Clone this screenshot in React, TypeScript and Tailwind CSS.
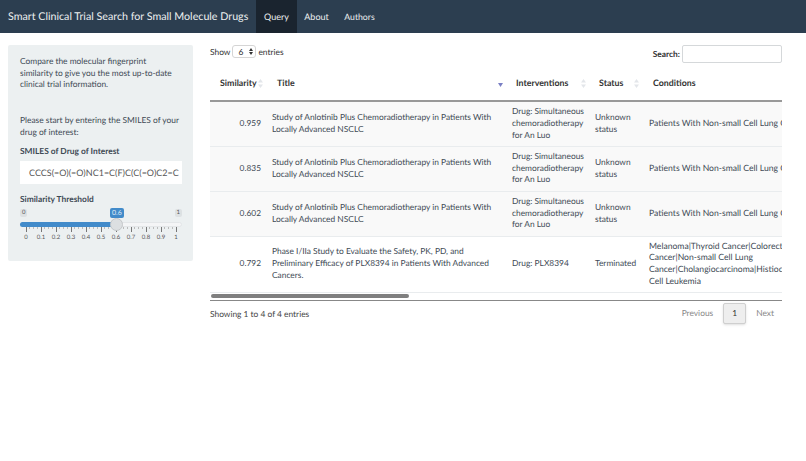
import React from 'react';

const rows = [
    {sim: '0.959', title: 'Study of Anlotinib Plus Chemoradiotherapy in Patients With Locally Advanced NSCLC', drug: 'Drug: Simultaneous chemoradiotherapy for An Luo', status: 'Unknown status', cond: 'Patients With Non-small Cell Lung Cancer', odd: true},
    {sim: '0.835', title: 'Study of Anlotinib Plus Chemoradiotherapy in Patients With Locally Advanced NSCLC', drug: 'Drug: Simultaneous chemoradiotherapy for An Luo', status: 'Unknown status', cond: 'Patients With Non-small Cell Lung Cancer', odd: true},
    {sim: '0.602', title: 'Study of Anlotinib Plus Chemoradiotherapy in Patients With Locally Advanced NSCLC', drug: 'Drug: Simultaneous chemoradiotherapy for An Luo', status: 'Unknown status', cond: 'Patients With Non-small Cell Lung Cancer', odd: true},
    {sim: '0.792', title: 'Phase I/IIa Study to Evaluate the Safety, PK, PD, and Preliminary Efficacy of PLX8394 in Patients With Advanced Cancers.', drug: 'Drug: PLX8394', status: 'Terminated', cond: 'Melanoma|Thyroid Cancer|Colorectal Cancer|Non-small Cell Lung Cancer|Cholangiocarcinoma|Histiocytic Cell Leukemia', odd: false},
];

const ticks = ['0', '0.1', '0.2', '0.3', '0.4', '0.5', '0.6', '0.7', '0.8', '0.9', '1'];

const SortIcon = () => (
    <svg width="5" height="9" viewBox="0 0 5 9" className="shrink-0">
        <path d="M2.5 0 L5 3.5 H0 Z" fill="#e3e6ea"/>
        <path d="M2.5 9 L5 5.5 H0 Z" fill="#e3e6ea"/>
    </svg>
);

const Slider = () => (
    <div className="relative mt-[3px] h-[38px]">
        <span className="absolute left-0 top-[1px] rounded-[2px] bg-[#dde1e3] px-[2px] text-[6px] leading-[8px] text-[#555]">0</span>
        <span className="absolute right-0 top-[1px] rounded-[2px] bg-[#dde1e3] px-[2px] text-[6px] leading-[8px] text-[#555]">1</span>
        <span className="absolute left-[90px] top-0 rounded-[2px] bg-[#428bca] px-[2px] text-[7px] leading-[10px] text-[#dfeaf5]">0.6</span>
        <div className="absolute left-0 right-0 top-[14px] h-[5px] rounded-full border border-[#e3e6e8] bg-[#f4f5f6]"/>
        <div className="absolute left-0 top-[14px] h-[5px] w-[96px] rounded-l-full bg-[#428bca]"/>
        <div className="absolute left-[6px] right-[6px] top-[19px] flex justify-between">
            {ticks.map((t, i) => (
                <React.Fragment key={t}>
                    <div className="relative flex w-0 flex-col items-center">
                        <div className="h-[5px] w-px shrink-0 bg-[#777]"/>
                        <span className="mt-[2px] text-[6px] leading-[8px] text-[#555]">{t}</span>
                    </div>
                    {i < ticks.length - 1 && [0, 1, 2].map(m => <div key={m} className="h-[2px] w-px bg-[#bbb]"/>)}
                </React.Fragment>
            ))}
        </div>
        <div className="absolute left-[90px] top-[10px] h-[13px] w-[13px] rounded-full border border-[#c4c7c9] bg-[#dcdfe1]"/>
    </div>
);

const App = () => {
    return (
        <div className="h-[461px] w-[806px] overflow-hidden bg-white font-['Lato','Liberation_Sans',sans-serif] text-[8.4px] text-[#333] [text-rendering:geometricPrecision]">
            <nav className="flex h-[33px] bg-[#2c3e50] text-[#ecf0f1]">
                <div className="w-[256px] whitespace-nowrap pl-[8px] text-[10.7px] leading-[33px]">Smart Clinical Trial Search for Small Molecule Drugs</div>
                <a className="w-[41px] bg-[#1a242f] text-center text-[9px] leading-[33px]">Query</a>
                <a className="w-[39px] text-center text-[9px] leading-[33px]">About</a>
                <a className="w-[46px] pl-[1px] text-center text-[8.7px] leading-[33px]">Authors</a>
            </nav>
            <div className="flex items-start pl-[8px] pt-[12px]">
                <aside className="h-[216px] w-[185px] shrink-0 rounded-[2px] bg-[#ecf0f1] pl-[12px] pr-[11px] pt-[11px] text-[#3e4a55]">
                    <p className="leading-[11.7px]">Compare the molecular fingerprint<br/>similarity to give you the most up-to-date<br/>clinical trial information.</p>
                    <p className="mt-[24px] leading-[11.7px]">Please start by entering the SMILES of your<br/>drug of interest:</p>
                    <label className="mt-[6px] block font-bold leading-[12px]">SMILES of Drug of Interest</label>
                    <div className="mt-[4px] h-[23px] overflow-hidden whitespace-nowrap bg-white pl-[9px] text-[9px] leading-[23px] text-[#555]">CCCS(=O)(=O)NC1=C(F)C(C(=O)C2=C</div>
                    <label className="mt-[9px] block font-bold leading-[12px]">Similarity Threshold</label>
                    <Slider/>
                </aside>
                <main className="ml-[17px] w-[572px] shrink-0">
                    <div className="flex h-[23px] items-start justify-between">
                        <div className="flex items-center leading-[12px]">
                            Show
                            <span className="mx-[2px] flex h-[13px] w-[24px] items-center justify-between rounded-[3px] border border-[#d5d5d5] pl-[5px] pr-[2px] leading-[12px]">
                                6
                                <svg width="4" height="7" viewBox="0 0 4 7"><path d="M2 0 L4 3 H0 Z M2 7 L4 4 H0 Z" fill="#333"/></svg>
                            </span>
                            entries
                        </div>
                        <div className="flex items-center font-bold">
                            Search:
                            <div className="ml-[2px] h-[18px] w-[100px] rounded-[2px] border border-[#d5d8da] bg-white"/>
                        </div>
                    </div>
                    <div className="overflow-hidden">
                        <table className="w-[604px] table-fixed border-collapse">
                            <colgroup>
                                <col className="w-[62px]"/>
                                <col className="w-[234px]"/>
                                <col className="w-[85px]"/>
                                <col className="w-[54px]"/>
                                <col className="w-[169px]"/>
                            </colgroup>
                            <thead className="text-[8.8px]">
                                <tr className="h-[33px] border-b-2 border-[#999]">
                                    <th className="pb-[2px] pl-[10px] pr-[9px] font-bold"><div className="flex items-center justify-between whitespace-nowrap">Similarity<SortIcon/></div></th>
                                    <th className="pb-[2px] pl-[5px] pr-[3px] text-left font-bold">
                                        <div className="flex items-center justify-between">
                                            Title
                                            <svg width="5" height="4" viewBox="0 0 5 4" className="mt-[4px] shrink-0"><path d="M0 0 H5 L2.5 4 Z" fill="#7a7fc4"/></svg>
                                        </div>
                                    </th>
                                    <th className="pb-[2px] pl-[10px] pr-[5px] text-left font-bold"><div className="flex items-center justify-between">Interventions<SortIcon/></div></th>
                                    <th className="pb-[2px] pl-[8px] pr-[6px] text-left font-bold"><div className="flex items-center justify-between">Status<SortIcon/></div></th>
                                    <th className="pb-[2px] pl-[8px] text-left font-bold">Conditions</th>
                                </tr>
                            </thead>
                            <tbody className="text-[#3e4a55]">
                                {rows.map(r => (
                                    <tr key={r.sim} className={"border-b border-[#e9ecee] " + (r.odd ? 'h-[45px] bg-[#f9f9f9]' : 'h-[56px]')}>
                                        <td className="pr-[11px] text-right leading-[11.7px]">{r.sim}</td>
                                        <td className="pr-[10px] leading-[11.7px]">{r.title}</td>
                                        <td className="pl-[6px] pr-[3px] leading-[11.7px]">{r.drug}</td>
                                        <td className="px-[4px] leading-[11.7px]">{r.status}</td>
                                        <td className="px-[4px] text-[8.6px] leading-[11.7px]">{r.cond}</td>
                                    </tr>
                                ))}
                            </tbody>
                        </table>
                    </div>
                    <div className="flex h-[8px] items-center border-b border-[#888] pl-[1px]">
                        <div className="h-[4px] w-[198px] rounded-full bg-[#7f7f7f]"/>
                    </div>
                    <div className="flex items-start justify-between pt-[2px]">
                        <div className="pt-[5px] leading-[12px] text-[#444]">Showing 1 to 4 of 4 entries</div>
                        <div className="flex items-center pr-[8px] text-[#888]">
                            <span className="mr-[10px]">Previous</span>
                            <span className="flex h-[21px] w-[23px] items-center justify-center rounded-[2px] border border-[#cfcfcf] bg-[#eee] text-[#333] shadow-sm">1</span>
                            <span className="ml-[10px]">Next</span>
                        </div>
                    </div>
                </main>
            </div>
        </div>
    );
};

export default App;
